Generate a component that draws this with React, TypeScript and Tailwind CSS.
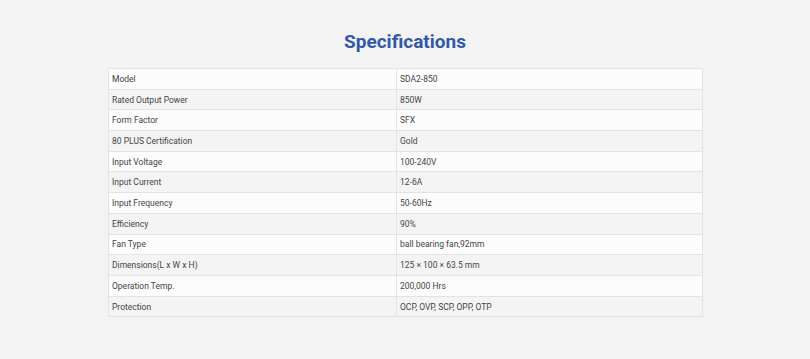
const SPECS: [string, string][] = [
  ["Model", "SDA2-850"],
  ["Rated Output Power", "850W"],
  ["Form Factor", "SFX"],
  ["80 PLUS Certification", "Gold"],
  ["Input Voltage", "100-240V"],
  ["Input Current", "12-6A"],
  ["Input Frequency", "50-60Hz"],
  ["Efficiency", "90%"],
  ["Fan Type", "ball bearing fan,92mm"],
  ["Dimensions(L x W x H)", "125 × 100 × 63.5 mm"],
  ["Operation Temp.", "200,000 Hrs"],
  ["Protection", "OCP, OVP, SCP, OPP, OTP"],
];

const App = () => {
  return (
    <main className="min-h-[359px] bg-[#f3f3f3] font-['Roboto',sans-serif] pt-[30px]">
      <h1 className="text-center text-[19px] leading-[24px] font-bold text-[#3457aa]">
        Specifications
      </h1>
      <table className="mx-auto mt-[14px] w-[595px] border-collapse border border-[#e3e3e3] text-[8.5px] text-[#444]">
        <tbody>
          {SPECS.map(([label, value], index) => (
            <tr
              key={label}
              className={index % 2 === 0 ? "bg-[#fcfcfc]" : "bg-[#f4f4f4]"}
            >
              <td className="h-[20.7px] w-[288px] border border-[#e3e3e3] pl-[3.5px] pr-[4px] pt-[1px] pb-0">
                {label}
              </td>
              <td className="h-[20.7px] border border-[#e3e3e3] pl-[3.5px] pr-[4px] pt-[1px] pb-0">
                {value}
              </td>
            </tr>
          ))}
        </tbody>
      </table>
    </main>
  );
};

export default App;
